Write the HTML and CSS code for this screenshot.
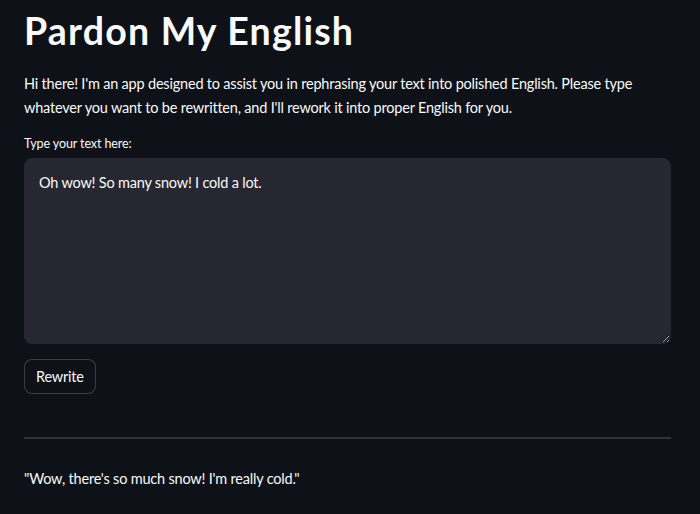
FILE: index.html
```html
<!DOCTYPE html>
<html lang="en">
<head>
<meta charset="utf-8">
<title>Pardon My English</title>
<link rel="stylesheet" href="styles.css">
</head>
<body>
<main class="app">
  <h1 class="title">Pardon My English</h1>
  <p class="intro">Hi there! I'm an app designed to assist you in rephrasing your text into polished English. Please type whatever you want to be rewritten, and I'll rework it into proper English for you.</p>
  <label class="label" for="src">Type your text here:</label>
  <textarea id="src" class="input">Oh wow! So many snow! I cold a lot.</textarea>
  <button class="btn" type="button">Rewrite</button>
  <hr class="divider">
  <p class="result">"Wow, there's so much snow! I'm really cold."</p>
</main>
</body>
</html>
```

FILE: styles.css
```css
html, body {
  margin: 0;
  padding: 0;
  background: #0e1117;
  color: #fafafa;
  font-family: Lato, "Open Sans", sans-serif;
}
.app {
  padding: 6px 29px 0 24px;
  display: flex;
  flex-direction: column;
  align-items: flex-start;
  font-size: 14.5px;
  letter-spacing: -0.2px;
}
.title {
  margin: 0;
  font-size: 37.5px;
  font-weight: 700;
  line-height: 50px;
  letter-spacing: 1.2px;
}
.intro {
  margin: 16px 0 0;
  line-height: 24px;
}
.label {
  margin-top: 16px;
  font-size: 12.5px;
  line-height: 16px;
  letter-spacing: -0.1px;
}
.input {
  margin-top: 6px;
  box-sizing: border-box;
  width: 100%;
  height: 186px;
  background: #262730;
  color: #fafafa;
  border: 1px solid #262730;
  border-radius: 8px;
  padding: 12px 14px;
  font-family: inherit;
  font-size: 14.5px;
  letter-spacing: -0.2px;
  line-height: 24px;
  resize: vertical;
  color-scheme: dark;
  outline: none;
}
.btn {
  margin-top: 15px;
  height: 35px;
  padding: 0 11px;
  background: #0e1117;
  color: #fafafa;
  border: 1px solid rgba(250, 250, 250, 0.2);
  border-radius: 8px;
  font-family: inherit;
  font-size: 14.5px;
  letter-spacing: -0.2px;
}
.divider {
  align-self: stretch;
  margin: 43px 0 0;
  border: none;
  height: 2px;
  background: #31333b;
}
.result {
  margin: 28px 0 0;
  line-height: 24px;
}
```
